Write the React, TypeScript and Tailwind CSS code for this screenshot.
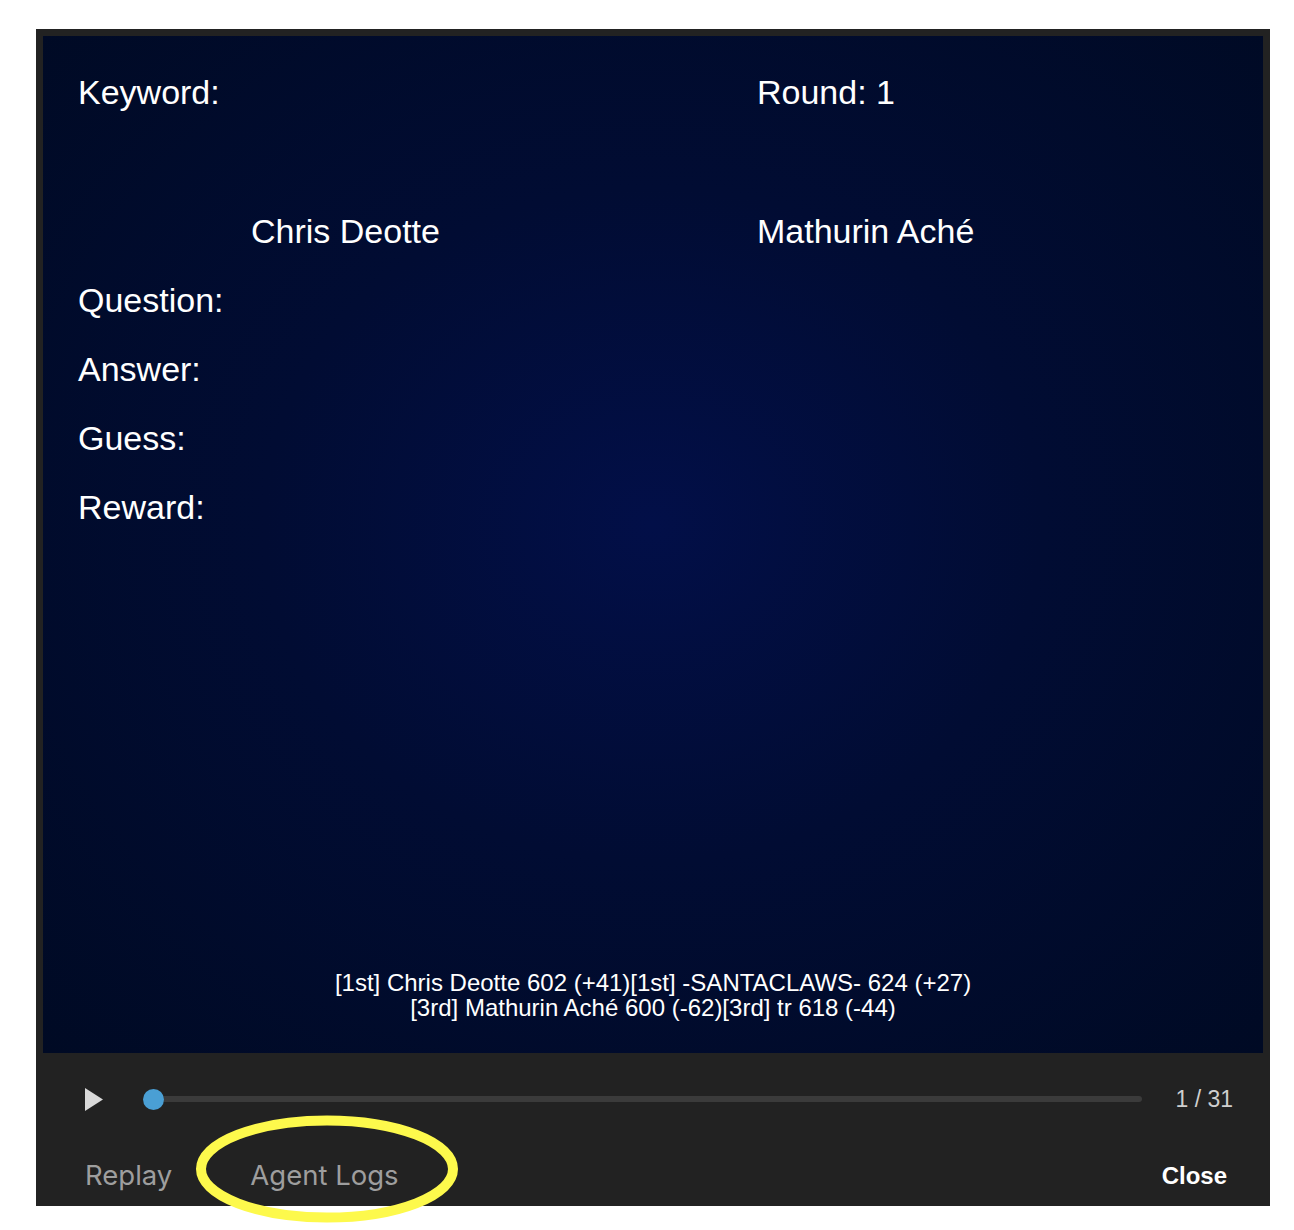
import React from 'react';

const rows = ['Question:', 'Answer:', 'Guess:', 'Reward:'];

const App = () => {
  return (
    <div className="min-h-[1230px] bg-white pt-[29px] font-['Liberation_Sans',Arial,sans-serif]">
      <div className="relative ml-[36px] h-[1177px] w-[1234px] bg-[#222222] px-[7px] pt-[7px]">
        {/* Game board */}
        <div className="flex h-[1017px] flex-col bg-[radial-gradient(ellipse_at_50%_48%,#020f48_0%,#010c33_45%,#000a24_100%)] pl-[35px] pt-[36px] pb-[33px] text-white">
          <div className="flex text-[34px] leading-[40px]">
            <div className="w-[679px]">Keyword:</div>
            <div>Round: 1</div>
          </div>
          <div className="mt-[99px] flex text-[34px] leading-[40px]">
            <div className="w-[679px] pl-[173px]">Chris Deotte</div>
            <div>Mathurin Aché</div>
          </div>
          {rows.map((label) => (
            <div key={label} className="mt-[29px] text-[34px] leading-[40px]">
              {label}
            </div>
          ))}
          <div className="mt-auto -ml-[35px] text-center text-[24px] leading-[25px]">
            <div>[1st] Chris Deotte 602 (+41)[1st] -SANTACLAWS- 624 (+27)</div>
            <div>[3rd] Mathurin Aché 600 (-62)[3rd] tr 618 (-44)</div>
          </div>
        </div>

        {/* Playback controls */}
        <div className="mt-[24px] flex h-[44px] items-center pl-[42px] pr-[30px]">
          <svg width="18" height="23" viewBox="0 0 18 23" className="shrink-0">
            <path d="M0 0 L18 11.5 L0 23 Z" fill="#d9d9d9" />
          </svg>
          <div className="relative ml-[40px] h-[21px] flex-1">
            <div className="absolute left-[10px] right-0 top-[7.5px] h-[6px] rounded-full bg-[#3b3b3b]" />
            <div className="absolute left-0 top-0 h-[21px] w-[21px] rounded-full bg-[#4a9fd4]" />
          </div>
          <div className="ml-[33px] text-[23px] text-[#cfcfcf]">1 / 31</div>
        </div>

        {/* Footer actions */}
        <div className="mt-[24px] flex h-[61px] items-center pl-[42px] pr-[36px]">
          <span className="font-['Inter',sans-serif] text-[27.5px] text-[#9e9e9e]">Replay</span>
          <span className="ml-[78px] font-['Inter',sans-serif] text-[27.5px] text-[#9e9e9e]">Agent Logs</span>
          <span className="ml-auto text-[24px] font-bold text-white">Close</span>
        </div>

        {/* Highlight annotation */}
        <svg
          className="pointer-events-none absolute left-[159px] top-[1086px]"
          width="264"
          height="108"
          viewBox="0 0 264 108"
        >
          <ellipse cx="132" cy="54" rx="126" ry="48.5" fill="none" stroke="#fdf94c" strokeWidth="10" />
        </svg>
      </div>
    </div>
  );
};

export default App;
